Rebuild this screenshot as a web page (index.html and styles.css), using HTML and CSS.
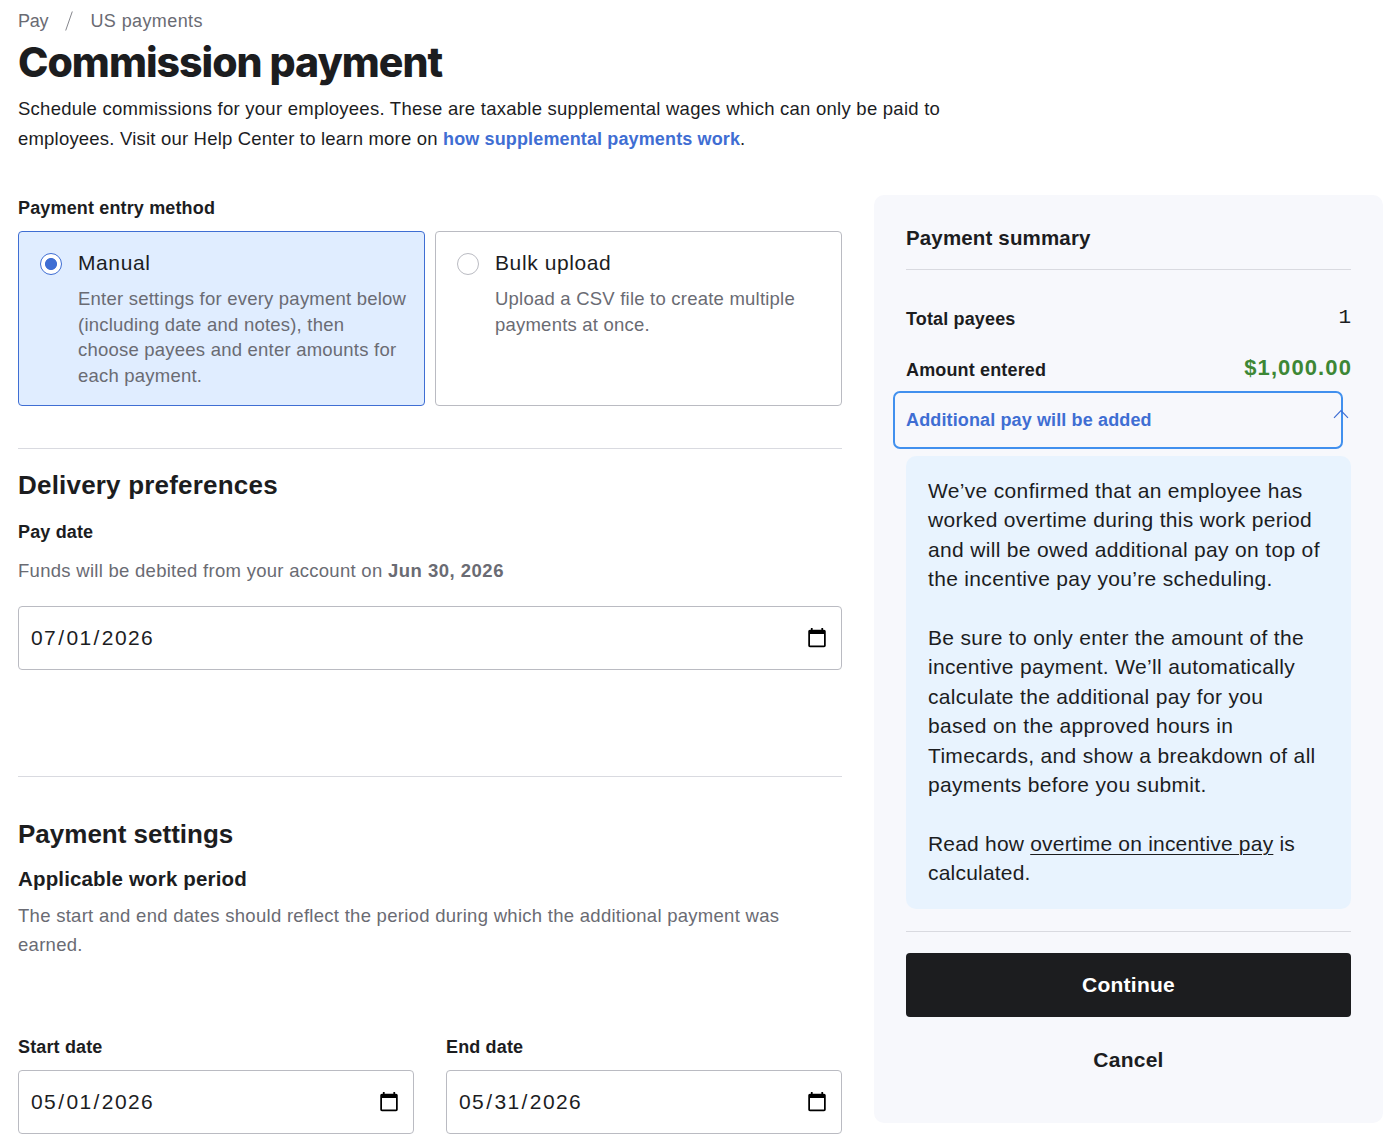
FILE: index.html
```html
<!DOCTYPE html>
<html lang="en">
<head>
  <meta charset="utf-8">
  <title>Commission payment</title>
  <link rel="stylesheet" href="styles.css">
</head>
<body>
  <header class="page-header">
    <nav class="breadcrumb">
      <a href="#">Pay</a>
      <svg class="slash" width="8" height="20" viewBox="0 0 8 20"><path d="M7.3 .5L.7 19.5" stroke="#85868c" fill="none"/></svg>
      <a href="#">US payments</a>
    </nav>
    <h1>Commission payment</h1>
    <p class="intro">Schedule commissions for your employees. These are taxable supplemental wages which can only be paid to <span class="help">employees. Visit our Help Center to learn more on <a href="#">how supplemental payments work</a>.</span></p>
  </header>

  <div class="columns">
    <main class="form">
      <div class="label">Payment entry method</div>
      <div class="cards">
        <label class="card selected">
          <input type="radio" name="method" checked>
          <span class="card-body">
            <span class="card-title">Manual</span>
            <span class="card-text">Enter settings for every payment below (including date and notes), then choose payees and enter amounts for each payment.</span>
          </span>
        </label>
        <label class="card">
          <input type="radio" name="method">
          <span class="card-body">
            <span class="card-title">Bulk upload</span>
            <span class="card-text">Upload a CSV file to create multiple payments at once.</span>
          </span>
        </label>
      </div>

      <section class="delivery">
        <h2>Delivery preferences</h2>
        <label class="label" for="payDate">Pay date</label>
        <p class="hint">Funds will be debited from your account on <strong>Jun 30, 2026</strong></p>
        <input type="date" id="payDate" value="2026-07-01">
      </section>

      <section class="settings">
        <h2>Payment settings</h2>
        <h3>Applicable work period</h3>
        <p class="hint">The start and end dates should reflect the period during which the additional payment was earned.</p>
        <div class="dates">
          <div>
            <label class="label" for="startDate">Start date</label>
            <input type="date" id="startDate" value="2026-05-01">
          </div>
          <div>
            <label class="label" for="endDate">End date</label>
            <input type="date" id="endDate" value="2026-05-31">
          </div>
        </div>
      </section>
    </main>

    <aside class="summary">
      <h3>Payment summary</h3>
      <div class="row">
        <span class="label">Total payees</span>
        <span class="count">1</span>
      </div>
      <div class="row">
        <span class="label">Amount entered</span>
        <span class="amount">$1,000.00</span>
      </div>
      <button class="toggle" type="button">
        Additional pay will be added
        <svg class="caret" width="16" height="10" viewBox="0 0 16 10"><path d="M1 8.8L8 1.6L15 8.8" stroke="#3f6ed3" stroke-width="1.2" fill="none"/></svg>
      </button>
      <div class="note">
        <p>We’ve confirmed that an employee has worked overtime during this work period and will be owed additional pay on top of the incentive pay you’re scheduling.</p>
        <p>Be sure to only enter the amount of the incentive payment. We’ll automatically calculate the additional pay for you based on the approved hours in Timecards, and show a breakdown of all payments before you submit.</p>
        <p>Read how <a href="#">overtime on incentive pay</a> is calculated.</p>
      </div>
      <div class="actions">
        <button class="continue" type="button">Continue</button>
        <button class="cancel" type="button">Cancel</button>
      </div>
    </aside>
  </div>
</body>
</html>
```
FILE: styles.css
```css
* {
  box-sizing: border-box;
}

body {
  margin: 0;
  padding: 0 17px 0 18px;
  height: 1146px;
  overflow: hidden;
  background: #fff;
  color: #1c1d1f;
  font-family: "Liberation Sans", Arial, sans-serif;
  font-size: 18.5px;
  letter-spacing: 0.25px;
}

h1, h2, h3, p {
  margin: 0;
}

button {
  font: inherit;
  letter-spacing: inherit;
  border: none;
  cursor: pointer;
}

.page-header {
  height: 195px;
}

.breadcrumb {
  display: flex;
  align-items: center;
  gap: 17px;
  height: 41px;
}

.breadcrumb a {
  padding-top: 1px;
  color: #6a6b73;
  font-size: 18px;
  letter-spacing: 0.4px;
  text-decoration: none;
}

.breadcrumb a:first-child {
  letter-spacing: -0.2px;
}

h1 {
  font-family: Inter, sans-serif;
  font-size: 41px;
  font-weight: 800;
  line-height: 42px;
  letter-spacing: -1px;
}

.intro {
  width: 940px;
  margin-top: 11px;
  line-height: 30px;
}

.intro .help {
  letter-spacing: 0.2px;
}

.intro a {
  color: #3f6ed3;
  font-size: 18px;
  font-weight: bold;
  letter-spacing: 0.13px;
  text-decoration: none;
}

.columns {
  display: grid;
  grid-template-columns: 824px 509px;
  gap: 32px;
  align-items: start;
}

.label {
  display: block;
  font-size: 18px;
  font-weight: bold;
  line-height: 26px;
  letter-spacing: 0.15px;
}

.cards {
  display: grid;
  grid-template-columns: 1fr 1fr;
  gap: 10px;
  margin-top: 10px;
}

.card {
  display: flex;
  gap: 16px;
  height: 175px;
  padding: 17px 0 0 21px;
  border: 1px solid #babbc2;
  border-radius: 4px;
}

.card.selected {
  background: #e0edff;
  border-color: #3f6ed3;
}

.card input {
  appearance: none;
  flex: none;
  width: 22px;
  height: 22px;
  margin: 4px 0 0;
  border: 1px solid #babbc2;
  border-radius: 50%;
  background: #fff;
}

.card input:checked {
  border-color: #3f6ed3;
  background: radial-gradient(circle, #3f6ed3 5.6px, #fff 6.4px);
}

.card-title {
  display: block;
  font-size: 21px;
  line-height: 28px;
  letter-spacing: 0.6px;
}

.card-text {
  display: block;
  width: 329px;
  margin-top: 9px;
  color: #6a6b73;
  line-height: 25.6px;
  letter-spacing: 0.22px;
}

.delivery {
  height: 328px;
  margin-top: 42px;
  padding-top: 20px;
  border-top: 1px solid #d9dae0;
}

h2 {
  font-size: 26px;
  line-height: 32px;
  letter-spacing: 0.2px;
}

.settings h2 {
  letter-spacing: 0;
}

.delivery .label {
  margin-top: 18px;
}

.hint {
  color: #6a6b73;
  line-height: 29px;
  letter-spacing: 0.28px;
}

.hint strong {
  letter-spacing: 0.5px;
}

.delivery .hint {
  margin: 11px 0 21px;
}

input[type="date"] {
  display: block;
  width: 100%;
  height: 64px;
  padding: 0 11px 0 11px;
  border: 1px solid #babbc2;
  border-radius: 4px;
  background: #fff;
  color: #1c1d1f;
  font: inherit;
  font-size: 21px;
  letter-spacing: 1.4px;
}

input[type="date"]::-webkit-calendar-picker-indicator {
  width: 22px;
  height: 22px;
}

.settings {
  padding-top: 41px;
  border-top: 1px solid #d9dae0;
}

h3 {
  font-size: 20.5px;
  line-height: 28px;
  letter-spacing: 0.15px;
}

.settings h3 {
  margin: 15px 0 8px;
}

.dates {
  display: grid;
  grid-template-columns: 1fr 1fr;
  gap: 32px;
  margin-top: 75px;
}

.dates .label {
  margin-bottom: 10px;
}

.summary {
  height: 928px;
  padding: 29px 32px 0;
  border-radius: 10px;
  background: #f7f8fc;
}

.summary h3 {
  height: 46px;
  margin-bottom: 22px;
  border-bottom: 1px solid #d9dae0;
}

.row {
  display: flex;
  justify-content: space-between;
  height: 51px;
  line-height: 51px;
}

.row .label {
  line-height: 55px;
}

.count {
  font-family: "Liberation Mono", monospace;
  font-size: 21px;
  letter-spacing: 0;
}

.amount {
  margin-right: -1px;
  color: #3d8735;
  font-size: 22px;
  font-weight: bold;
  line-height: 49px;
  letter-spacing: 1.1px;
}

.toggle {
  position: relative;
  display: block;
  width: 450px;
  height: 58px;
  margin: -3px 0 7px -13px;
  padding: 0 0 0 11px;
  border: 2px solid #4190ee;
  border-radius: 7px;
  background: none;
  color: #3f6ed3;
  font-size: 18px;
  font-weight: bold;
  letter-spacing: 0.13px;
  text-align: left;
}

.caret {
  position: absolute;
  top: 16px;
  right: -8px;
}

.note {
  height: 453px;
  padding: 20px 24px 20px 22px;
  border-radius: 10px;
  background: #e8f3fe;
  font-size: 21px;
  line-height: 29.4px;
  letter-spacing: 0.33px;
}

.note p + p {
  margin-top: 29.4px;
}

.note p:last-child {
  letter-spacing: 0.2px;
}

.note a {
  color: inherit;
  text-decoration-thickness: 1px;
  text-underline-offset: 3px;
}

.actions {
  margin-top: 22px;
  padding-top: 21px;
  border-top: 1px solid #d9dae0;
}

.actions button {
  display: block;
  width: 100%;
  height: 64px;
  border-radius: 4px;
  font-size: 21px;
  font-weight: bold;
}

.actions .continue {
  background: #1c1d1f;
  color: #fff;
}

.actions .cancel {
  margin-top: 11px;
  background: none;
  color: #1c1d1f;
}
```
